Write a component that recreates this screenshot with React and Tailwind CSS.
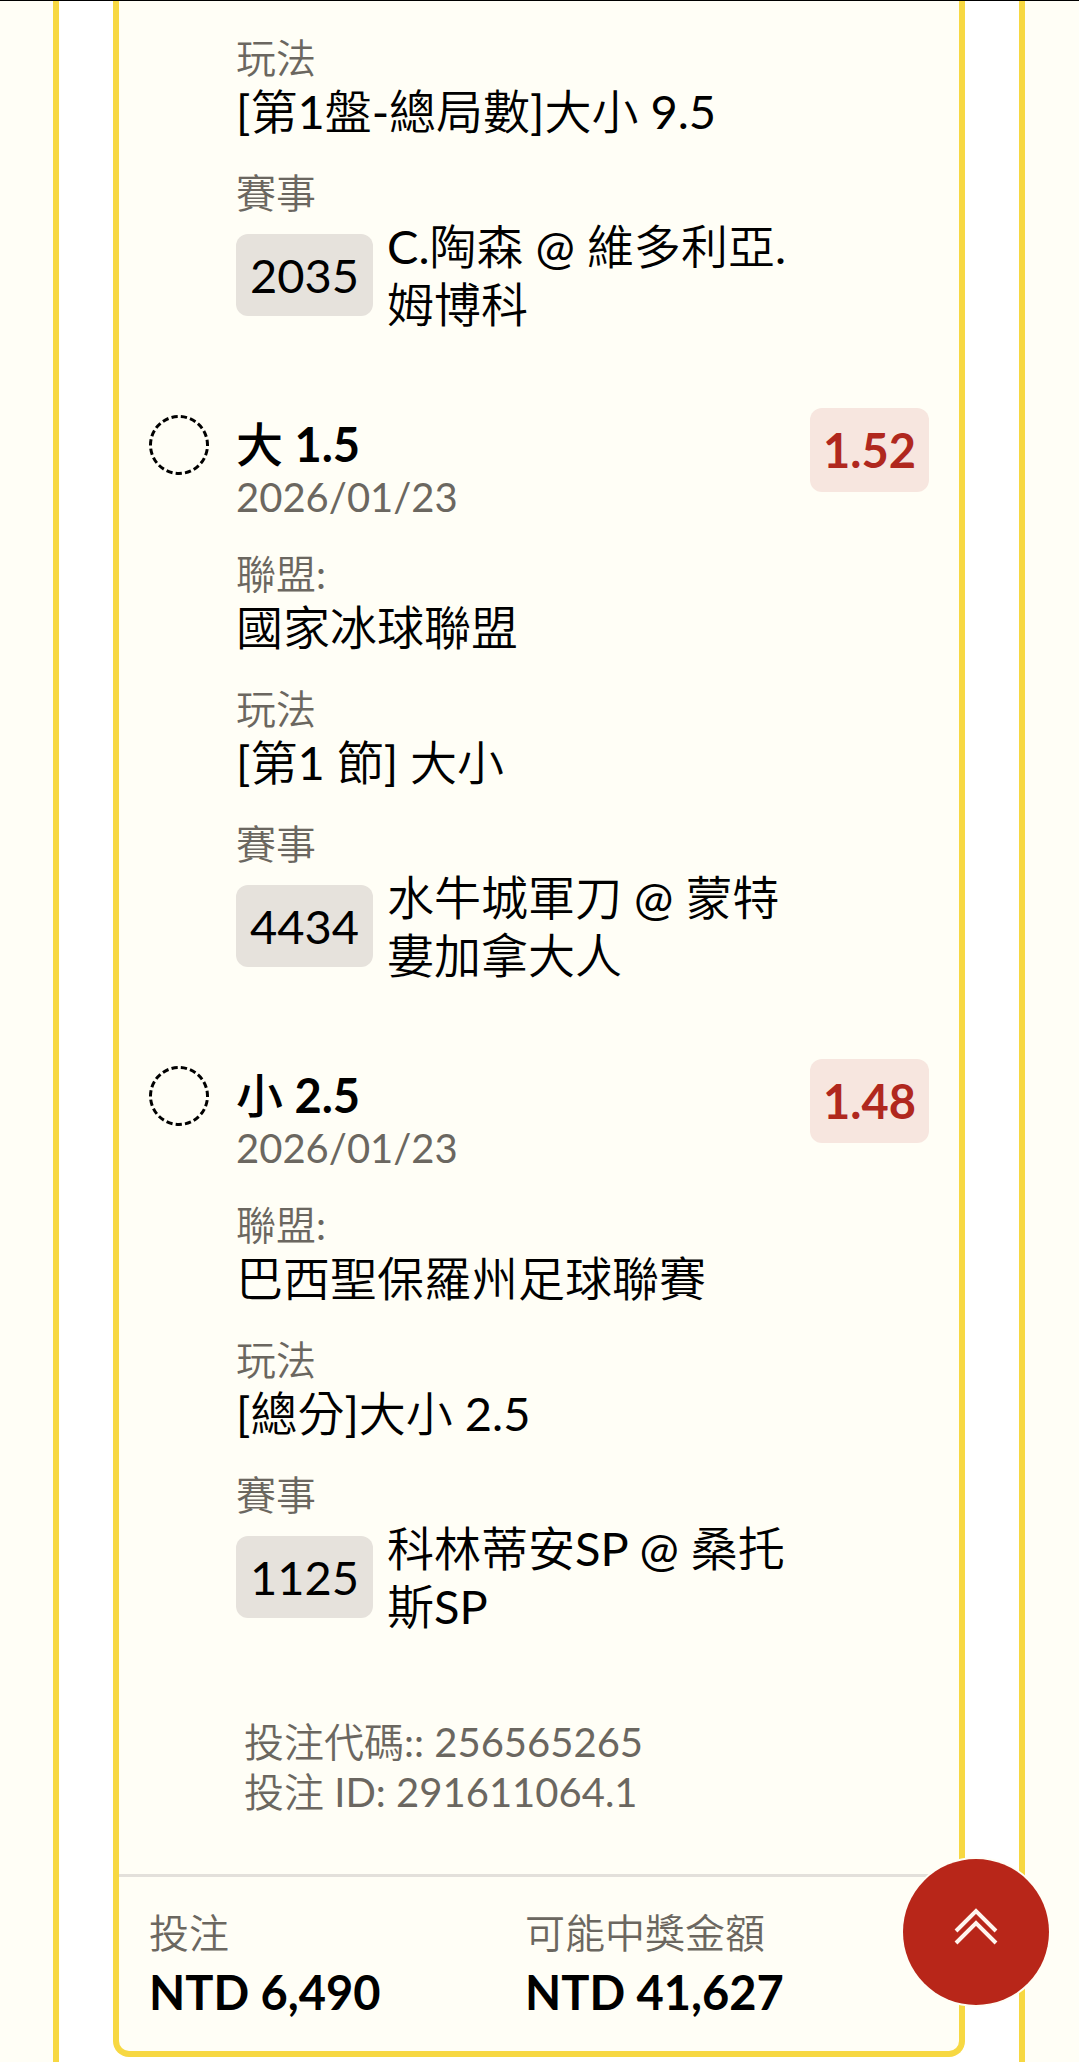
const legs = [
  {
    pick: '小',
    line: '9.5',
    date: '2026/01/23',
    partial: true,
    play: '[第1盤-總局數]大小 9.5',
    code: '2035',
    match: 'C.陶森 @ 維多利亞.姆博科',
  },
  {
    pick: '大',
    line: '1.5',
    date: '2026/01/23',
    odds: '1.52',
    league: '國家冰球聯盟',
    play: '[第1 節] 大小',
    code: '4434',
    match: '水牛城軍刀 @ 蒙特婁加拿大人',
  },
  {
    pick: '小',
    line: '2.5',
    date: '2026/01/23',
    odds: '1.48',
    league: '巴西聖保羅州足球聯賽',
    play: '[總分]大小 2.5',
    code: '1125',
    match: '科林蒂安SP @ 桑托斯SP',
  },
];

function Field({ label, children }) {
  return (
    <div>
      <dt className="text-[40px] leading-[48px] text-[#6b6760]">{label}</dt>
      <dd className="text-[47px] leading-[58px]">{children}</dd>
    </div>
  );
}

function Leg({ leg }) {
  return (
    <article className="flex items-start">
      <div className="w-[87px] shrink-0 pt-[7px]">
        {!leg.partial && (
          <svg className="size-[60px]" viewBox="0 0 60 60" fill="none" aria-hidden="true">
            <circle cx="30" cy="30" r="28.5" stroke="#000" strokeWidth="3" pathLength="171" strokeDasharray="6 3" strokeDashoffset="5" />
          </svg>
        )}
      </div>
      <div className="min-w-0 flex-1">
        {!leg.partial && (
          <header className="flex items-start justify-between">
            <div className="pt-[7px] pb-[29px]">
              <h2 className="text-[47px] leading-[58px] font-bold">
                <span className="font-['Lato','Noto_Sans_CJK_TC_Medium','Noto_Sans_CJK_TC',sans-serif] font-medium">{leg.pick}</span> {leg.line}
              </h2>
              <p className="text-[40px] leading-[48px] text-[#6b6760]">{leg.date}</p>
            </div>
            <span className="rounded-xl bg-[#f7e6df] px-[13px] py-[13px] text-[47px] leading-[58px] font-bold text-[#b0281e]">
              {leg.odds}
            </span>
          </header>
        )}
        <dl className="flex flex-col gap-[29px] pr-[140px]">
          {leg.league && <Field label="聯盟:">{leg.league}</Field>}
          <Field label="玩法">{leg.play}</Field>
          <Field label="賽事">
            <div className="flex items-center gap-[14px]">
              <span className="rounded-xl bg-[#e6e2dc] px-[14px] py-3">{leg.code}</span>
              <span>{leg.match}</span>
            </div>
          </Field>
        </dl>
      </div>
    </article>
  );
}

function Total({ label, value }) {
  return (
    <div>
      <dt className="text-[40px] leading-[48px] text-[#6b6760]">{label}</dt>
      <dd className="pt-[6px] text-[47px] leading-[58px] font-bold">{value}</dd>
    </div>
  );
}

export default function App() {
  return (
    <div
      lang="zh-Hant"
      className="min-h-screen border-t border-black bg-[#fffef6] font-['Lato','Noto_Sans_CJK_TC_DemiLight','Noto_Sans_CJK_TC',sans-serif] text-black"
    >
      <main className="mr-[54px] ml-[53px] border-x-6 border-[#f7d842] bg-white px-[54px] pb-[5px]">
        <section className="rounded-b-2xl border-x-6 border-b-6 border-[#f7d842] bg-[#fffef6]">
          <div className="flex flex-col gap-[75px] px-[30px] pt-[33px]">
            {legs.map((leg) => (
              <Leg key={leg.code} leg={leg} />
            ))}
          </div>
          <div className="mt-[82px] pb-[57px] pl-[125px] text-[40px] leading-[50px] text-[#6b6760]">
            <p>投注代碼:: 256565265</p>
            <p>投注 ID: 291611064.1</p>
          </div>
          <dl className="grid grid-cols-2 border-t-3 border-[#e3e0db] pt-8 pr-[58px] pb-[30px] pl-[30px]">
            <Total label="投注" value="NTD 6,490" />
            <Total label="可能中獎金額" value="NTD 41,627" />
          </dl>
        </section>
      </main>

      <button
        type="button"
        aria-label="回到頂部"
        onClick={() => window.scrollTo({ top: 0, behavior: 'smooth' })}
        className="fixed right-[30px] bottom-[57px] flex size-[146px] items-center justify-center rounded-full bg-[#b82619] ring-2 ring-[#fffef6]"
      >
        <svg className="h-[50px] w-[44px]" viewBox="0 0 44 50" fill="none" stroke="#fff5ee" strokeWidth="4">
          <path d="M2 24 22 4l20 20M2 36l20-20 20 20" />
        </svg>
      </button>
    </div>
  );
}
